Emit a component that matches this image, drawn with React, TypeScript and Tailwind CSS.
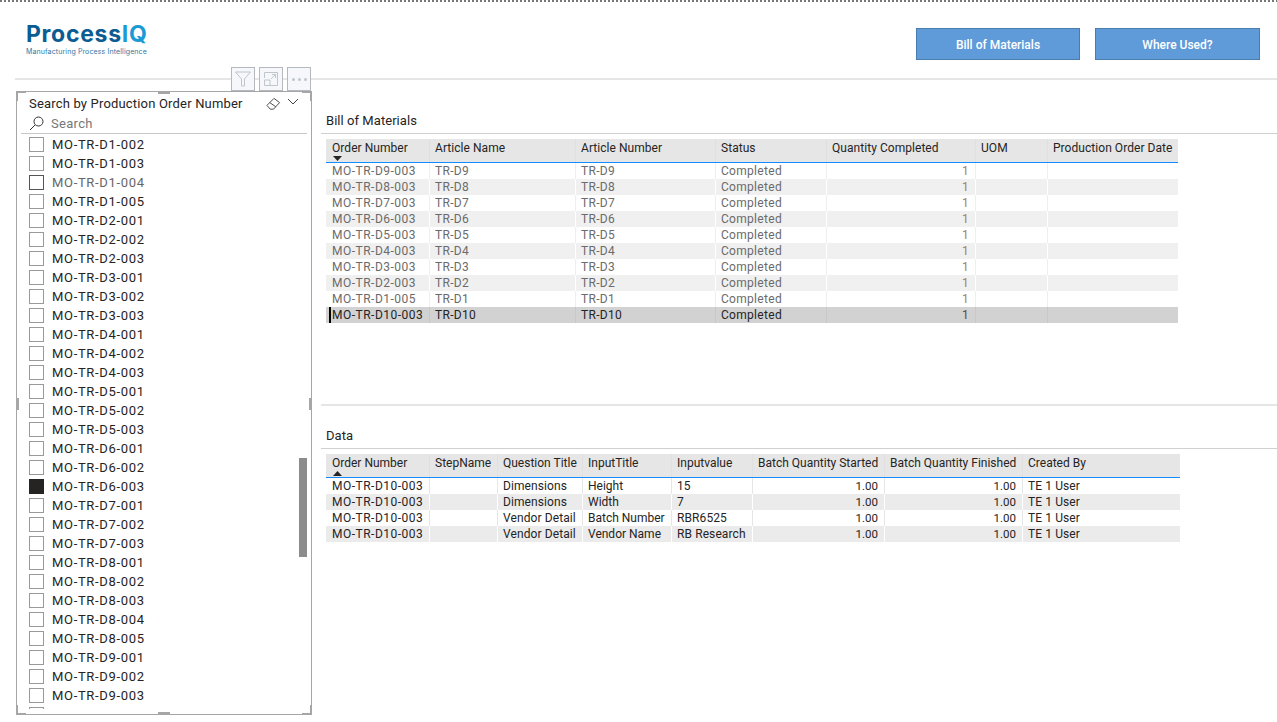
const FONT = "font-['Roboto','Liberation_Sans',sans-serif]";

const ORDERS = [
  "MO-TR-D1-002", "MO-TR-D1-003", "MO-TR-D1-004", "MO-TR-D1-005",
  "MO-TR-D2-001", "MO-TR-D2-002", "MO-TR-D2-003",
  "MO-TR-D3-001", "MO-TR-D3-002", "MO-TR-D3-003",
  "MO-TR-D4-001", "MO-TR-D4-002", "MO-TR-D4-003",
  "MO-TR-D5-001", "MO-TR-D5-002", "MO-TR-D5-003",
  "MO-TR-D6-001", "MO-TR-D6-002", "MO-TR-D6-003",
  "MO-TR-D7-001", "MO-TR-D7-002", "MO-TR-D7-003",
  "MO-TR-D8-001", "MO-TR-D8-002", "MO-TR-D8-003", "MO-TR-D8-004", "MO-TR-D8-005",
  "MO-TR-D9-001", "MO-TR-D9-002", "MO-TR-D9-003", "MO-TR-D9-004",
];

const BOM_HEAD = ["Order Number", "Article Name", "Article Number", "Status", "Quantity Completed", "UOM", "Production Order Date"];

const BOM_ROWS = [
  ["MO-TR-D9-003", "TR-D9"],
  ["MO-TR-D8-003", "TR-D8"],
  ["MO-TR-D7-003", "TR-D7"],
  ["MO-TR-D6-003", "TR-D6"],
  ["MO-TR-D5-003", "TR-D5"],
  ["MO-TR-D4-003", "TR-D4"],
  ["MO-TR-D3-003", "TR-D3"],
  ["MO-TR-D2-003", "TR-D2"],
  ["MO-TR-D1-005", "TR-D1"],
  ["MO-TR-D10-003", "TR-D10"],
];

const DATA_HEAD = ["Order Number", "StepName", "Question Title", "InputTitle", "Inputvalue", "Batch Quantity Started", "Batch Quantity Finished", "Created By"];

const DATA_ROWS = [
  ["Dimensions", "Height", "15"],
  ["Dimensions", "Width", "7"],
  ["Vendor Detail", "Batch Number", "RBR6525"],
  ["Vendor Detail", "Vendor Name", "RB Research"],
];

const BOM_GRID = "grid grid-cols-[103px_146px_140px_111px_149px_72px_131px]";
const DATA_GRID = "grid grid-cols-[103px_68px_85px_89px_81px_132px_138px_158px]";

function Cell({ children, right, sep, className = "" }: { children?: React.ReactNode; right?: boolean; sep: string; className?: string }) {
  return (
    <div className={`h-4 pl-[5px] pr-1.5 leading-4 whitespace-nowrap overflow-hidden border-l ${sep} ${right ? "text-right" : ""} ${className}`}>
      {children}
    </div>
  );
}

function SectionTitle({ title }: { title: string }) {
  return (
    <div className="h-[23px] pl-[5px] border-b border-[#d0d0d0] text-[13px] leading-[20px] tracking-[0.05px] text-[#252423]">
      {title}
    </div>
  );
}

function SortArrow({ up }: { up?: boolean }) {
  return (
    <svg width="9" height="5" viewBox="0 0 9 5" className="block ml-px">
      <path d={up ? "M0 5 L4.5 0 L9 5 Z" : "M0 0 L9 0 L4.5 5 Z"} fill="#252423" />
    </svg>
  );
}

function HeadCell({ label, arrow }: { label: string; arrow?: React.ReactNode }) {
  return (
    <div className="pl-[5px] pt-[1px] leading-4 whitespace-nowrap border-l border-[#e0e0e0] first:border-transparent">
      {label}
      {arrow}
    </div>
  );
}

function BomTable() {
  return (
    <div className="ml-[5px] mt-[5px] w-[852px] text-[12px]">
      <div className={`${BOM_GRID} h-6 bg-[#e6e6e6] border-b-[1.5px] border-[#118dff] text-[#252423] tracking-[0.05px]`}>
        {BOM_HEAD.map((h, i) => (
          <HeadCell key={h} label={h} arrow={i === 0 ? <SortArrow /> : undefined} />
        ))}
      </div>
      {BOM_ROWS.map((r, i) => {
        const selected = i === BOM_ROWS.length - 1;
        const bg = selected ? "bg-[#d2d2d2] text-[#252423]" : i % 2 ? "bg-[#f0f0f0] text-[#6b6b6b]" : "bg-white text-[#6b6b6b]";
        const sep = selected ? "border-[#c8c8c8]" : i % 2 ? "border-white" : "border-[#eeeeee]";
        return (
          <div key={r[0]} className={`${BOM_GRID} relative tracking-[0.3px] ${bg}`}>
            {selected && <span className="absolute left-[3px] top-0 h-4 w-[2px] bg-black" />}
            <Cell sep="border-transparent" className="tracking-[0.5px]">{r[0]}</Cell>
            <Cell sep={sep}>{r[1]}</Cell>
            <Cell sep={sep}>{r[1]}</Cell>
            <Cell sep={sep}>Completed</Cell>
            <Cell sep={sep} right>
              <span className={selected ? "text-[#5a4a3a]" : "text-[#a5825f]"}>1</span>
            </Cell>
            <Cell sep={sep} />
            <Cell sep={sep} />
          </div>
        );
      })}
    </div>
  );
}

function DataTable() {
  return (
    <div className="ml-[5px] mt-[5px] w-[854px] text-[12px] text-[#252423]">
      <div className={`${DATA_GRID} h-6 bg-[#e6e6e6] border-b-[1.5px] border-[#118dff]`}>
        {DATA_HEAD.map((h, i) => (
          <HeadCell key={h} label={h} arrow={i === 0 ? <SortArrow up /> : undefined} />
        ))}
      </div>
      {DATA_ROWS.map((r, i) => {
        const bg = i % 2 ? "bg-[#ebebeb]" : "bg-white";
        const sep = i % 2 ? "border-white" : "border-[#e6e6e6]";
        return (
          <div key={r[1]} className={`${DATA_GRID} tracking-[0.1px] ${bg}`}>
            <Cell sep="border-transparent" className="tracking-[0.5px]">MO-TR-D10-003</Cell>
            <Cell sep={sep} />
            <Cell sep={sep}>{r[0]}</Cell>
            <Cell sep={sep} className="tracking-normal">{r[1]}</Cell>
            <Cell sep={sep}>{r[2]}</Cell>
            <Cell sep={sep} right className="text-[11.5px] tracking-normal">1.00</Cell>
            <Cell sep={sep} right className="text-[11.5px] tracking-normal">1.00</Cell>
            <Cell sep={sep}>TE 1 User</Cell>
          </div>
        );
      })}
    </div>
  );
}

function Handle({ className }: { className: string }) {
  return <span className={`absolute bg-[#a6a6a6] ${className}`} />;
}

function Corner({ className, d }: { className: string; d: string }) {
  return (
    <svg width="10" height="10" viewBox="0 0 10 10" className={`absolute ${className}`}>
      <path d={d} fill="#a6a6a6" />
    </svg>
  );
}

function VisualHeaderButton({ children }: { children: React.ReactNode }) {
  return (
    <div className="w-6 h-6 flex items-center justify-center border border-[#b3b9bf] bg-[#f5f7fa]">
      {children}
    </div>
  );
}

function Slicer() {
  return (
    <div className="relative ml-4 mt-[11px] w-[296px] h-[624px] border border-[#a6a6a6] bg-white">
      {/* visual header */}
      <div className="absolute left-[214px] -top-[25px] flex gap-1 z-10">
        <VisualHeaderButton>
          <svg width="18" height="18" viewBox="0 0 18 18" fill="none" stroke="#c0c6cc" strokeWidth="1">
            <path d="M1.5 2 H16.5 L10.5 9 V16 H7.5 V9 Z" />
          </svg>
        </VisualHeaderButton>
        <VisualHeaderButton>
          <svg width="14" height="14" viewBox="0 0 14 14" fill="none" stroke="#c0c6cc" strokeWidth="1">
            <path d="M0.5 6 V0.5 H13.5 V13.5 H0.5 V8 H6 V13.5" />
            <path d="M7 7 L11.5 2.5 M8 2.5 H11.5 V6" />
          </svg>
        </VisualHeaderButton>
        <VisualHeaderButton>
          <div className="flex gap-[3px]">
            <span className="w-[3px] h-[3px] rounded-full bg-[#c0c6cc]" />
            <span className="w-[3px] h-[3px] rounded-full bg-[#c0c6cc]" />
            <span className="w-[3px] h-[3px] rounded-full bg-[#c0c6cc]" />
          </div>
        </VisualHeaderButton>
      </div>

      {/* resize handles */}
      <Corner className="-left-[1px] -top-[1px]" d="M0 0 H10 V2 H2 V10 H0 Z" />
      <Corner className="-right-[1px] -top-[1px]" d="M0 0 H10 V10 H8 V2 H0 Z" />
      <Corner className="-left-[1px] -bottom-[1px]" d="M0 0 H2 V8 H10 V10 H0 Z" />
      <Corner className="-right-[1px] -bottom-[1px]" d="M8 0 H10 V10 H0 V8 H8 Z" />
      <Handle className="left-[141px] -top-[1px] w-3 h-[3px]" />
      <Handle className="left-[141px] -bottom-[1px] w-3 h-[3px]" />
      <Handle className="-left-[1px] top-[306px] w-[3px] h-3" />
      <Handle className="-right-[1px] top-[306px] w-[3px] h-3" />

      {/* header */}
      <div className="flex items-center justify-between h-6 pl-3 pr-3 text-[13px] tracking-[0.18px] text-[#252423]">
        <span>Search by Production Order Number</span>
        <div className="flex items-center gap-[6px]">
          <svg width="15" height="14" viewBox="0 0 16 14" fill="none" stroke="#444" strokeWidth="1">
            <path d="M1 8.5 L8.5 1 L14.5 5.5 L8 12.5 H4.5 Z" />
            <path d="M4 5.5 L10.5 10" />
          </svg>
          <svg width="12" height="8" viewBox="0 0 12 8" fill="none" stroke="#444" strokeWidth="1" className="-mt-1">
            <path d="M1 1 L6 6 L11 1" />
          </svg>
        </div>
      </div>

      {/* search */}
      <div className="mx-1 h-[18px] pb-[2px] flex items-center gap-[7px] pl-2 border-b border-[#c8c8c8] text-[13px] tracking-[0.3px] text-[#777777]">
        <svg width="15" height="15" viewBox="0 0 15 15" fill="none" stroke="#333" strokeWidth="1">
          <circle cx="9.5" cy="5.5" r="4.5" />
          <path d="M6 9 L1 14" />
        </svg>
        <span>Search</span>
      </div>

      {/* list */}
      <div className="relative h-[575px] overflow-hidden pt-[1px]">
        {ORDERS.map(o => {
          const checked = o === "MO-TR-D6-003";
          const hovered = o === "MO-TR-D1-004";
          return (
            <div key={o} className="h-[19px] flex items-center pl-3 gap-2 text-[13px] tracking-[0.67px] text-[#252423]">
              <span
                className={`w-[15px] h-[15px] border ${
                  checked ? "bg-[#252423] border-[#252423]" : hovered ? "border-[#555555]" : "border-[#999999]"
                }`}
              />
              <span className={hovered ? "text-[#666666]" : ""}>{o}</span>
            </div>
          );
        })}
        <span className="absolute right-1 top-[324px] w-2 h-[99px] bg-[#8c8c8c]" />
      </div>
    </div>
  );
}

export default function App() {
  return (
    <div className={`${FONT} h-[722px] w-[1277px] overflow-hidden bg-white`}>
      {/* dotted top edge */}
      <div className="h-[3px] bg-[repeating-linear-gradient(90deg,#777777_0px,#777777_2px,transparent_2px,transparent_4px)] border-b border-white" />

      {/* header */}
      <header className="h-[77px] ml-[15px] border-b-2 border-[#e6e6e6] flex items-start justify-between pr-[17px]">
        <div className="ml-[11px] mt-[18px] font-['Inter',sans-serif]">
          <div className="text-[23px] leading-[26px] font-bold tracking-[0.7px] text-[#0b5c92]">
            Process<span className="text-[#1c9ad6]">IQ</span>
          </div>
          <div className="mt-px text-[7px] leading-[8px] tracking-[0.12px] text-[#2f78a8]">Manufacturing Process Intelligence</div>
        </div>
        <div className="flex gap-[15px] mt-[25px]">
          <button className="w-[164px] h-8 pt-[2px] bg-[#5f9bd9] border border-[#4a7dad] text-white text-[12px] font-medium">
            Bill of Materials
          </button>
          <button className="w-[165px] h-8 pt-[2px] bg-[#5f9bd9] border border-[#4a7dad] text-white text-[12px] font-medium">
            Where Used?
          </button>
        </div>
      </header>

      <div className="flex">
        <Slicer />

        <main className="flex-1 ml-[9px]">
          <section className="h-[326px] pt-[31px] border-b-2 border-[#e6e6e6]">
            <SectionTitle title="Bill of Materials" />
            <BomTable />
          </section>
          <section className="pt-[20px]">
            <SectionTitle title="Data" />
            <DataTable />
          </section>
        </main>
      </div>
    </div>
  );
}
